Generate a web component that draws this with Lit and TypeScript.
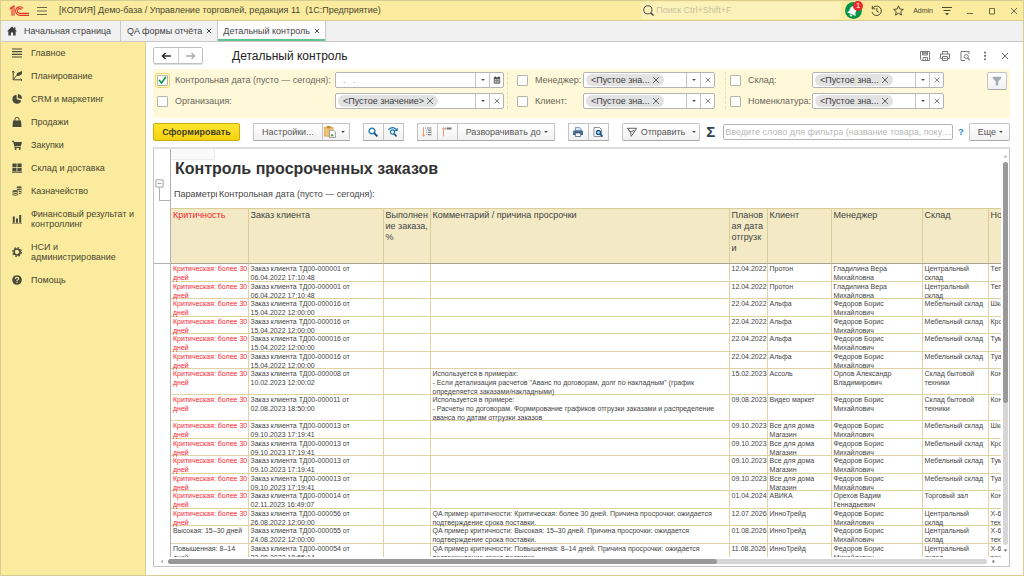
import { LitElement, html, css, svg, nothing, TemplateResult } from "lit";
import { customElement, property } from "lit/decorators.js";
import { classMap } from "lit/directives/class-map.js";

const shapes: Record<string, TemplateResult> = {
  logo: svg`<g fill="none" stroke="#e0322b" stroke-width="1.1"><path d="M.6 4.400 3 2.800v8"/><path d="M1.500 2.900 5 .9v9.900"/><path d="M14.200 3.400A4.300 4.300 0 1 0 11 10.400h9"/><path d="M12.700 4.500A2.400 2.400 0 1 0 11 8.400h9"/></g>`,
  lines: svg`<path d="M0 1.500h10M0 5h10M0 8.500h10" stroke="#6d6846" stroke-width="1" fill="none"/>`,
  home: svg`<path d="M5 .6 0 5.2h1.4V9.6h2.5V6.4h2.2v3.2h2.500V5.2H10L8.4 3.7V1.2H7.2v1.400z" fill="#3c3c3c"/>`,
  main: svg`<path d="M0 1h10M0 3.600h10M0 6.300h10M0 9h10" stroke="#4a4a3c" stroke-width="1.200" fill="none"/>`,
  plan: svg`<g stroke="#4a4a3c" fill="none"><path d="M1.200 0v8.800H10M1.200 8.800 4.500 4.500h2.200M0 1.600 1.200 0l1.200 1.600M8.600 7.400 10 8.800 8.600 10"/></g><path d="M5 2 10 0v3L7 5 4.500 4z" fill="#4a4a3c"/>`,
  pie: svg`<path d="M4.400.8A4.500 4.500 0 1 0 9.200 6.600L4.800 5.200z" fill="#4a4a3c"/><path d="M5.800 0v4l4 1A4.300 4.300 0 0 0 5.800 0z" fill="#4a4a3c"/>`,
  bag: svg`<path d="M1 3.500h8l.5 6.500h-9z" fill="#4a4a3c"/><path d="M3 5V2.200a2 2 0 0 1 4 0V5" fill="none" stroke="#4a4a3c"/>`,
  cart: svg`<path d="M0 .8h1.800l.5 1.200H10L8.800 6.200H3.300l.2.800h5.200v.9H2.800L1.200 1.800H0z" fill="#4a4a3c"/><circle cx="3.600" cy="9" r="1" fill="#4a4a3c"/><circle cx="7.800" cy="9" r="1" fill="#4a4a3c"/>`,
  boxes: svg`<path d="M.4.600h4.200v3.600H.4zM5.400.600h4.200v3.600H5.400zM.4 5h4.200v3.200H.4zM5.400 5h4.200v3.200H5.400zM0 8.800h10v1H0z" fill="#4a4a3c"/>`,
  coins: svg`<g fill="#5a5844"><ellipse cx="7.200" cy="1.400" rx="2.600" ry="1.100"/><path d="M4.800 2.400q2.400 1.400 4.900 0v1q-2.400 1.300-3.500.9L4.800 3.600zM6.800 5q1.600.2 2.900-.6v1q-1.200.8-2.900.7zM6.800 6.800q1.600.2 2.900-.6v1q-1.200.8-2.900.7z"/><ellipse cx="3.200" cy="5.200" rx="2.900" ry="1.100"/><path d="M.3 6.200q2.800 1.500 5.800 0v1q-2.800 1.500-5.800 0zM.3 8q2.800 1.500 5.800 0v1q-2.800 1.500-5.800 0z"/></g>`,
  chart: svg`<path d="M0 9.400h10v.8H0zM.8 2.400h2v6.400h-2zM4 4.600h2v4.200H4zM7.200 1h2v7.800h-2z" fill="#4a4a3c"/>`,
  gear: svg`<circle cx="5" cy="5" r="3" fill="none" stroke="#4a4a3c" stroke-width="1.700"/><circle cx="5" cy="5" r="4.300" fill="none" stroke="#4a4a3c" stroke-width="1.300" stroke-dasharray="1.700 1.680"/>`,
  help: svg`<circle cx="5" cy="5" r="4.800" fill="#4a4a3c"/><path d="M3.300 3.900q0-1.500 1.700-1.500t1.700 1.400Q6.700 4.700 5 5.300v.9M5 7v1.100" stroke="#faeb9e" stroke-width="1.100" fill="none"/>`,
  search: svg`<circle cx="4.400" cy="4.400" r="3.700" fill="none" stroke="#444" stroke-width=".9"/><path d="m7 7 2.600 2.600" stroke="#444" stroke-width="1.300"/>`,
  bell: svg`<circle cx="8" cy="8" r="8" fill="#079447"/><g transform="translate(-1 1) rotate(22 8 8)"><path d="M8 3c-2.200 0-3.100 1.500-3.100 3.200v2.400L3.600 10.600h8.800l-1.300-2V6.200C11.100 4.500 10.200 3 8 3zM6.600 11.400h2.800q-.2 1.400-1.400 1.400t-1.400-1.400z" fill="#fff"/></g>`,
  clock: svg`<g fill="none" stroke="#4f4b30" stroke-width=".9"><path d="M1.400 3A4.300 4.300 0 1 1 .9 6.400"/><path d="M1.200.8v2.600h2.600M5.300 2.700v2.900l1.900 1.200"/></g>`,
  star: svg`<path d="m5 .8 1.250 2.900 3.150.3L7 6.100l.7 3.100L5 7.500 2.300 9.200 3 6.100.6 4l3.150-.3z" fill="none" stroke="#4f4b30" stroke-width=".9"/>`,
  service: svg`<path d="M0 1.500h10M1.500 4.500h7" stroke="#4f4b30"/><path d="M3 7h4L5 9.200z" fill="#4f4b30"/>`,
  minimize: svg`<path d="M2 7.500h6" stroke="#6f6a48"/>`,
  maximize: svg`<path d="M2.500 2.500h5v5.500h-5z" fill="none" stroke="#6f6a48"/>`,
  cross: svg`<path d="m2 2 6 6M8 2 2 8" stroke="#555" fill="none" stroke-width=".9"/>`,
  tabCross: svg`<path d="m1.500 1.500 7 7M8.500 1.500l-7 7" stroke="#333" fill="none" stroke-width="1.500"/>`,
  back: svg`<path d="M10 5H1.500M4.500 2 1.500 5l3 3" stroke="#333" stroke-width="1.600" fill="none"/>`,
  forward: svg`<path d="M0 5h8.500M5.500 2l3 3-3 3" stroke="#aaa" stroke-width="1.300" fill="none"/>`,
  save: svg`<g fill="none" stroke="#6b6b6b" stroke-width=".9"><path d="M.5.5h9v9h-8l-1-1zM2.500.5v3.500h5V.5M3 9.500V6.500h4.500v3M5.500 7.500v2"/></g><path d="M3 1h4v2.500H3z" fill="#999"/>`,
  print: svg`<g fill="none" stroke="#6b6b6b" stroke-width=".9"><path d="M2.500 3V.5h5V3M2 7.500H.5V3h9v4.500H8M2.500 5.500h5v4h-5z"/><path d="M3.500 7.500h3"/></g>`,
  preview: svg`<g fill="none" stroke="#6b6b6b" stroke-width=".9"><path d="M9 3V.5H1v9h4"/><circle cx="6.300" cy="5.500" r="2"/><path d="m7.700 7 2 2.500" stroke-width="1.200"/></g>`,
  dots: svg`<path d="M4.200.8h1.700v1.700H4.200zM4.200 4.100h1.700v1.700H4.200zM4.200 7.400h1.700v1.700H4.200z" fill="#5a5a5a"/>`,
  funnel: svg`<path d="M.8.800h8.400v1.700L6.200 5.500v4H3.800v-4L.8 2.500z" fill="#a3abb5"/>`,
  caret: svg`<path d="M3.200 4h3.600L5 6z" fill="#444"/>`,
  calendar: svg`<path d="M1 1.500h8v8H1z" fill="#555"/><path d="M2 4h1.500v1.500H2zM4.300 4h1.500v1.500H4.300zM6.600 4h1.500v1.500H6.600zM2 6.500h1.500V8H2zM4.300 6.500h1.500V8H4.300zM6.600 6.500h1.500V8H6.600z" fill="#fff"/><path d="M2.800.5v2M7.200.5v2" stroke="#333" stroke-width="1.300"/>`,
  clip: svg`<path d="M.5 1h7v7.500h-7z" fill="#f0c672" stroke="#d79a3a" stroke-width=".6"/><path d="M2.500 0h3v2h-3z" fill="#c88a28"/><path d="M4.500 3.500h3.500l1.500 1.500v4.600h-5z" fill="#fff" stroke="#8b8b8b" stroke-width=".7"/><path d="m5.500 8.500 1.200-2.300 1.600 2.300z" fill="#4f8f5b"/>`,
  find: svg`<circle cx="4" cy="4" r="2.900" fill="none" stroke="#2077ae" stroke-width="1.400"/><path d="m6.200 6.200 3.200 3.200" stroke="#164f7c" stroke-width="1.900"/>`,
  findNext: svg`<path d="M.3 2.800Q4.500-1.300 8.300 2.300" fill="none" stroke="#2077ae" stroke-width="1.100"/><path d="M9.700.6v3.500H6.300z" fill="#2077ae"/><circle cx="4.500" cy="5" r="2.100" fill="none" stroke="#2077ae" stroke-width="1.200"/><path d="m6.200 6.800 2.300 2.700" stroke="#164f7c" stroke-width="1.600"/>`,
  expand: svg`<path d="M1.500 0v9M0 7.500 1.500 9.500 3 7.500" stroke="#f09a72" fill="none"/><path d="M3 1h1M5 1h4.500M6 3.200h3.500M6 5.400h3.500M6 7.600h3.500M4.500 3.200h.8M4.500 5.400h.8M4.500 7.600h.8" stroke="#808080" stroke-width="1.200"/>`,
  collapse: svg`<path d="M1.500 9.500V.8M0 2.500 1.500.5 3 2.500" stroke="#f09a72" fill="none"/><path d="M3.500 1.500h1M5 1.500h4.500" stroke="#777" stroke-width="2"/>`,
  printer: svg`<path d="M2.500.4h4l1.500 1.500V4H2.500z" fill="#d5e4f0" stroke="#4d7396" stroke-width=".7"/><path d="M1 3.500h8q1 0 1 1V8H0V4.500q0-1 1-1z" fill="#466d92"/><path d="M2.300 6h5.400v3.500H2.300z" fill="#fff" stroke="#234f76" stroke-width=".7"/>`,
  pagePreview: svg`<path d="M1 .5h5.500l2 2v7H1z" fill="#fff" stroke="#777" stroke-width=".8"/><circle cx="5.500" cy="5.500" r="2" fill="#cbe5f5" stroke="#155b8f" stroke-width="1.300"/><path d="m7 7 2.600 2.600" stroke="#155b8f" stroke-width="1.700"/>`,
  send: svg`<path d="M.5 1.300h9.300L4.200 9.300 3.500 5zM.5 1.300 3.500 5l4-1.800" fill="none" stroke="#555" stroke-width=".9"/>`,
  minus: svg`<path d="M1 1h8v8H1zM3 5h4" fill="none" stroke="#999"/>`,
  up: svg`<path d="M3 6h4L5 3.500z" fill="#aaa"/>`,
  down: svg`<path d="M3 4h4L5 6.500z" fill="#666"/>`,
  left: svg`<path d="M6.500 3v4L4 5z" fill="#aaa"/>`,
  right: svg`<path d="M4 3v4l2.500-2z" fill="#666"/>`,
};

const icon = (name: string, width = 10, height = 10, box = "0 0 10 10") =>
  html`<svg width=${width} height=${height} viewBox=${box} aria-hidden="true">${shapes[name]}</svg>`;

const shared = css`
  * { box-sizing: border-box; }
  svg { display: block; flex: none; }
  button, input { font: inherit; color: inherit; margin: 0; padding: 0; }
  button { display: flex; align-items: center; justify-content: center; border: 0; background: none; white-space: nowrap; }
`;

@customElement("nav-panel")
class NavPanel extends LitElement {
  static styles = [shared, css`
    :host { display: block; width: 145px; flex: none; background: #faeb9e; border-right: 1px solid #d8cd92; }
    .list { display: flex; flex-direction: column; gap: 13px; padding: 6px 4px 0 11px; }
    .item { display: grid; grid-template-columns: 10px 1fr; gap: 9px; align-items: center; line-height: 10px; color: #4a4730; text-decoration: none; }
  `];
  items = [
    ["main", "Главное"], ["plan", "Планирование"], ["pie", "CRM и маркетинг"], ["bag", "Продажи"],
    ["cart", "Закупки"], ["boxes", "Склад и доставка"], ["coins", "Казначейство"],
    ["chart", "Финансовый результат и контроллинг"], ["gear", "НСИ и администрирование"], ["help", "Помощь"],
  ];
  render() {
    return html`<nav class="list">${this.items.map(([i, t]) => html`<a class="item" href="#">${icon(i)}<span>${t}</span></a>`)}</nav>`;
  }
}

@customElement("filter-field")
class FilterField extends LitElement {
  @property() label = "";
  @property() token = "";
  @property({ type: Boolean }) date = false;
  @property({ type: Boolean }) checked = false;
  static styles = [shared, css`
    :host { display: grid; grid-template-columns: 18px var(--label-width) 1fr; align-items: center; height: 16px; }
    .check { appearance: none; width: 11px; height: 11px; border: 1px solid #b5b5a8; border-radius: 1px; background: #fff; }
    .check:checked { outline: 1px solid #f0d967; outline-offset: 1px; background: #fff url("data:image/svg+xml,%3Csvg xmlns='http://www.w3.org/2000/svg' viewBox='0 0 9 9'%3E%3Cpath d='M1 4l2.500 3L8 .8' fill='none' stroke='%23079447' stroke-width='1.600'/%3E%3C/svg%3E"); }
    .label { color: #6a675a; white-space: nowrap; }
    .field { display: flex; height: 16px; border: 1px solid #b4b4b4; border-radius: 2px; background: #fff; min-width: 0; }
    .value { display: flex; flex: 1; align-items: center; min-width: 0; padding: 0 2px; }
    .text { flex: 1; width: 0; min-width: 0; border: 0; outline: 0; background: none; color: #888; }
    .chip { display: flex; align-items: center; gap: 1px; height: 12px; padding: 0 3px 0 5px; border-radius: 6px; background: #e2e2e2; color: #3c3c3c; white-space: nowrap; }
    .side { width: 14px; border-left: 1px solid #c4c4c4; }
  `];
  render() {
    return html`
      <input class="check" id="use" type="checkbox" ?checked=${this.checked} aria-label="Использовать">
      <label class="label" for="value">${this.label}</label>
      <div class="field">
        <div class="value">
          ${this.token ? html`<span class="chip">${this.token}<button aria-label="Убрать">${icon("cross")}</button></span>` : nothing}
          <input class="text" id="value" type="text" .value=${this.date ? "  .   ." : ""}>
        </div>
        <button class="side" aria-label="Выбрать">${icon("caret")}</button>
        <button class="side" aria-label=${this.date ? "Календарь" : "Очистить"}>${this.date ? icon("calendar", 8, 8) : icon("cross", 8, 8)}</button>
      </div>`;
  }
}

type Row = [string, string, string, string, string, string, string, string];
const CRIT = "Критическая: более 30 дней";
const FED = "Федоров Борис Михайлович";
const order = (n: string, d: string) => `Заказ клиента ТД00-0000${n} от ${d}`;
const reason = (s: string) => `QA пример критичности: ${s} дней. Причина просрочки: ожидается\nподтверждение срока поставки.`;

const rows: Row[] = [
  [CRIT, order("01", "06.04.2022 17:10:48"), "", "12.04.2022", "Протон", "Гладилина Вера Михайловна", "Центральный склад", "Теп"],
  [CRIT, order("01", "06.04.2022 17:10:48"), "", "12.04.2022", "Протон", "Гладилина Вера Михайловна", "Центральный склад", "Теп"],
  [CRIT, order("16", "15.04.2022 12:00:00"), "", "22.04.2022", "Альфа", FED, "Мебельный склад", "Шка"],
  [CRIT, order("16", "15.04.2022 12:00:00"), "", "22.04.2022", "Альфа", FED, "Мебельный склад", "Кро"],
  [CRIT, order("16", "15.04.2022 12:00:00"), "", "22.04.2022", "Альфа", FED, "Мебельный склад", "Тум"],
  [CRIT, order("16", "15.04.2022 12:00:00"), "", "22.04.2022", "Альфа", FED, "Мебельный склад", "Туа"],
  [CRIT, order("08", "10.02.2023 12:00:02"), "Используется в примерах:\n- Если детализация расчетов \"Аванс по договорам, долг по накладным\" (график\nопределяется заказами/накладными)", "15.02.2023", "Ассоль", "Орлов Александр Владимирович", "Склад бытовой техники", "Кон"],
  [CRIT, order("11", "02.08.2023 18:50:00"), "Используется в примере:\n- Расчеты по договорам. Формирование графиков отгрузки заказами и распределение\nаванса по датам отгрузки заказов", "09.08.2023", "Видео маркет", FED, "Склад бытовой техники", "Кон"],
  [CRIT, order("13", "09.10.2023 17:19:41"), "", "09.10.2023", "Все для дома Магазин", FED, "Мебельный склад", "Шка"],
  [CRIT, order("13", "09.10.2023 17:19:41"), "", "09.10.2023", "Все для дома Магазин", FED, "Мебельный склад", "Кро"],
  [CRIT, order("13", "09.10.2023 17:19:41"), "", "09.10.2023", "Все для дома Магазин", FED, "Мебельный склад", "Тум"],
  [CRIT, order("13", "09.10.2023 17:19:41"), "", "09.10.2023", "Все для дома Магазин", FED, "Мебельный склад", "Туа"],
  [CRIT, order("14", "02.11.2023 16:49:07"), "", "01.04.2024", "АВИКА", "Орехов Вадим Геннадьевич", "Торговый зал", "Кон"],
  [CRIT, order("56", "26.08.2022 12:00:00"), reason("Критическая: более 30"), "12.07.2026", "ИнноТрейд", FED, "Центральный склад", "Х-67\nтехн"],
  ["Высокая: 15–30 дней", order("55", "24.08.2022 12:00:00"), reason("Высокая: 15–30"), "01.08.2026", "ИнноТрейд", FED, "Центральный склад", "Х-67\nтехн"],
  ["Повышенная: 8–14 дней", order("54", "22.08.2022 18:55:14"), reason("Повышенная: 8–14"), "11.08.2026", "ИнноТрейд", FED, "Центральный склад", "Х-67\nтехн"],
];

@customElement("report-sheet")
class ReportSheet extends LitElement {
  static styles = [shared, css`
    :host { display: grid; grid-template-columns: 17px minmax(0, 1fr) 8px; grid-template-rows: minmax(0, 1fr) 9px; min-height: 0; border: 1px solid #c4c4c4; border-top: 2px solid #e0e0e0; }
    .gutter { display: flex; flex-direction: column; border-right: 1px solid #b0b0b0; }
    .tree { height: 115px; padding: 30px 0 0; border-bottom: 1px solid #b0b0b0; }
    .fold { margin-left: 1px; }
    .branch { height: 13px; margin-left: 5px; border: solid #b0b0b0; border-width: 0 0 1px 1px; }
    .area { overflow: hidden; }
    .corner { width: 44px; height: 11px; background: #fafafa; border: solid #eee; border-width: 0 1px 1px 0; }
    .title { margin: 0; padding-left: 4px; font-size: 16px; line-height: 18px; color: #333; }
    .params { display: flex; height: 30px; padding: 11px 0 0 3px; font-size: 9px; line-height: 11px; color: #444; white-space: nowrap; }
    .name { width: 43px; overflow: hidden; margin-right: 2px; }
    .table { table-layout: fixed; width: 900px; border-collapse: collapse; font-size: 7px; line-height: 9px; color: #444; }
    .head { height: 55px; padding: 1px 0 0 2px; border: 1px solid #d9cd99; border-bottom-color: #aaa58c; border-left-width: 0; background: #f3eac5; font-size: 9px; line-height: 11px; font-weight: 400; text-align: left; vertical-align: top; white-space: pre; }
    .cell { padding: 0 0 0 2px; border: solid #ddd3a6; border-width: 0 1px 1px 0; vertical-align: top; }
    .lines { height: 17px; white-space: pre-line; }
    .row:nth-child(even) .lines { height: 16px; }
    .row.tall .lines { height: 25px; }
    .red { color: #fb2430; }
    .w1 { width: 77px; } .w2 { width: 135px; } .w3 { width: 47px; } .w4 { width: 299px; } .w5 { width: 38px; }
    .w6 { width: 64px; } .w7 { width: 91px; } .w8 { width: 66px; }
    .vertical { display: flex; flex-direction: column; align-items: center; gap: 1px; padding: 3px 0 2px; }
    .horizontal { grid-column: 1 / 4; display: flex; align-items: center; gap: 2px; padding: 0 11px 0 3px; }
    .track { flex: 1; background: #d6d6d6; border-radius: 3px; }
    .vertical .track { width: 5px; }
    .horizontal .track { height: 5px; }
    .thumb { background: #999; border-radius: 3px; }
    .vertical .thumb { height: 63%; }
    .horizontal .thumb { height: 5px; width: 67%; }
  `];
  heads = ["Критичность", "Заказ клиента", "Выполнен\nие заказа,\n%", "Комментарий / причина просрочки", "Планов\nая дата\nотгрузк\nи", "Клиент", "Менеджер", "Склад", "Номенклатура"];
  render() {
    return html`
      <div class="gutter"><div class="tree"><button class="fold" aria-label="Свернуть">${icon("minus", 9, 9)}</button><div class="branch"></div></div></div>
      <div class="area">
        <div class="corner"></div>
        <h2 class="title">Контроль просроченных заказов</h2>
        <div class="params"><span class="name">Параметры:</span><span>Контрольная дата (пусто — сегодня):</span></div>
        <table class="table">
          <thead><tr>${this.heads.map((h, i) => html`<th class="head w${i + 1} ${i ? "" : "red"}">${h}</th>`)}</tr></thead>
          <tbody>${rows.map(([level, ord, note, date, client, manager, store, item]) => {
            const cells = [level, ord, "", note, date, client, manager, store, item];
            return html`<tr class=${classMap({ row: true, tall: note.split("\n").length > 2 })}>${cells.map((c, i) =>
              html`<td class="cell"><div class=${classMap({ lines: true, red: i === 0 && level === CRIT })}>${c}</div></td>`)}</tr>`;
          })}</tbody>
        </table>
      </div>
      <div class="vertical">${icon("up", 9, 9)}<div class="track"><div class="thumb"></div></div>${icon("down", 9, 9)}</div>
      <div class="horizontal">${icon("left", 9, 9)}<div class="track"><div class="thumb"></div></div>${icon("right", 9, 9)}</div>`;
  }
}

@customElement("app-root")
class AppRoot extends LitElement {
  static styles = [shared, css`
    :host { display: flex; flex-direction: column; box-sizing: border-box; height: 100vh; overflow: hidden; border: 1px solid #d8cd92; background: #fff; font: 9px/11px "Liberation Sans", Arial, sans-serif; color: #444; }
    .titlebar { display: flex; align-items: center; height: 20px; flex: none; padding: 0 4px 0 8px; background: #faeb9e; border-bottom: 1px solid #d8cd92; color: #4a4730; }
    .menu { margin: 0 12px 0 7px; }
    .caption { flex: 1; white-space: pre; }
    .global { display: flex; align-items: center; gap: 2px; width: 200px; height: 17px; padding-left: 2px; border-radius: 2px; background: #fcf1b8; }
    .query { flex: 1; min-width: 0; border: 0; background: none; outline: 0; }
    .query::placeholder { color: #c9c3a2; opacity: 1; }
    .notify { position: relative; margin-left: 4px; }
    .count { position: absolute; top: -1px; right: -1px; width: 10px; height: 10px; border-radius: 5px; background: #ee2a2a; color: #fff; font-size: 8px; line-height: 10px; text-align: center; }
    .tools { display: flex; align-items: center; gap: 11px; margin-left: 9px; }
    .user { font-size: 7px; margin: 0 -2px; }
    .window { display: flex; gap: 12px; margin-left: 13px; }
    .tabs { display: flex; height: 21px; flex: none; background: #f1f1f1; border-bottom: 1px solid #c9c9c9; }
    .tab { display: flex; align-items: center; gap: 4px; padding: 0 5px 0 6px; border-right: 1px solid #c9c9c9; }
    .tab.start { gap: 7px; padding-right: 9px; }
    .tab.active { padding: 0 5px; background: #fff; box-shadow: inset 0 -2px #5fc18e; }
    .body { display: flex; flex: 1; min-height: 0; }
    .main { display: flex; flex-direction: column; flex: 1; min-width: 0; padding: 5px 13px 8px 7px; }
    .heading { display: flex; align-items: center; height: 17px; flex: none; }
    .history { display: flex; height: 17px; border: 1px solid #c0c0c0; border-radius: 2px; box-shadow: 0 1px #ddd; }
    .step { width: 24px; }
    .step + .step { border-left: 1px solid #ccc; }
    .name { flex: 1; margin: 0 0 0 29px; font-size: 12px; line-height: 16px; font-weight: 400; color: #222; }
    .actions { display: flex; gap: 10px; }
    .filters { display: flex; flex: none; margin: 5px 0; padding: 3px 3px 9px 4px; background: #fff8d9; }
    .group { display: grid; gap: 5px; --label-width: 160px; }
    .group.wide { flex: 1; }
    .group.people { width: 208px; padding-left: 9px; margin-left: 3px; border-left: 1px dashed #e6dfc0; --label-width: 48px; }
    .group.goods { width: 219px; padding-left: 4px; margin-left: 10px; border-left: 1px dashed #e6dfc0; --label-width: 64px; }
    .btn { height: 18px; padding: 0 8px; border: 1px solid #c4c4c4; border-bottom-color: #a9a9a9; border-radius: 2px; background: linear-gradient(#fff, #f1f1f1); color: #555; }
    .btn.settings { margin-left: 43px; width: 20px; padding: 0; }
    .toolbar { display: flex; align-items: center; flex: none; gap: 13px; margin-bottom: 6px; }
    .join { display: flex; }
    .join .btn { border-radius: 0; }
    .join .btn + .btn { border-left: 0; }
    .btn.small { width: 21px; padding: 0; }
    .join .btn.small + .btn.small { width: 20px; }
    .btn.pair { padding: 0 1px; gap: 2px; }
    .btn.run { width: 87px; border-color: #c9ab0c; background: linear-gradient(#ffe52e, #f5d211); color: #444025; font-weight: 700; }
    .btn.more { padding: 0 3px 0 8px; }
    .btn.send { gap: 4px; padding: 0 0 0 4px; }
    .tail { display: flex; flex: 1; align-items: center; gap: 5px; min-width: 0; margin-left: -7px; }
    .sum { width: 12px; font-size: 15px; line-height: 16px; font-weight: 700; color: #2f4256; }
    .find { flex: 1; min-width: 0; height: 16px; padding: 0 1px; border: 1px solid #b4b4b4; border-radius: 2px; text-overflow: ellipsis; }
    .find::placeholder { color: #b9b9b9; opacity: 1; }
    .hint { color: #1c87c9; font-weight: 700; text-decoration: none; }
    .sheet { flex: 1; }
  `];
  render() {
    const token = "<Пустое зна...";
    return html`
      <header class="titlebar">
        ${icon("logo", 21, 12, "0 0 21 12")}
        <button class="menu" aria-label="Меню">${icon("lines", 10, 10)}</button>
        <span class="caption">[КОПИЯ] Демо-база / Управление торговлей, редакция 11  (1С:Предприятие)</span>
        <label class="global">${icon("search", 11, 11)}<input class="query" type="search" placeholder="Поиск Ctrl+Shift+F"></label>
        <button class="notify" aria-label="Уведомления">${icon("bell", 17, 17, "0 0 16 16")}<span class="count">1</span></button>
        <div class="tools">
          <button aria-label="История">${icon("clock", 11, 11)}</button>
          <button aria-label="Избранное">${icon("star", 11, 11)}</button>
          <span class="user">Admin</span>
          <button aria-label="Сервис">${icon("service")}</button>
        </div>
        <div class="window">
          <button aria-label="Свернуть">${icon("minimize")}</button>
          <button aria-label="Развернуть">${icon("maximize")}</button>
          <button aria-label="Закрыть">${icon("cross")}</button>
        </div>
      </header>
      <div class="tabs">
        <button class="tab start">${icon("home")}Начальная страница</button>
        <button class="tab">QA формы отчёта${icon("tabCross", 6, 6)}</button>
        <button class="tab active">Детальный контроль${icon("tabCross", 6, 6)}</button>
      </div>
      <div class="body">
        <nav-panel></nav-panel>
        <main class="main">
          <div class="heading">
            <div class="history"><button class="step" aria-label="Назад">${icon("back")}</button><button class="step" aria-label="Вперед">${icon("forward")}</button></div>
            <h1 class="name">Детальный контроль</h1>
            <div class="actions">${["save", "print", "preview", "dots", "cross"].map((n) => html`<button aria-label=${n}>${icon(n)}</button>`)}</div>
          </div>
          <section class="filters">
            <div class="group wide">
              <filter-field label="Контрольная дата (пусто — сегодня):" date checked></filter-field>
              <filter-field label="Организация:" token="<Пустое значение>"></filter-field>
            </div>
            <div class="group people">
              <filter-field label="Менеджер:" token=${token}></filter-field>
              <filter-field label="Клиент:" token=${token}></filter-field>
            </div>
            <div class="group goods">
              <filter-field label="Склад:" token=${token}></filter-field>
              <filter-field label="Номенклатура:" token=${token}></filter-field>
            </div>
            <button class="btn settings" aria-label="Отбор">${icon("funnel")}</button>
          </section>
          <div class="toolbar">
            <button class="btn run">Сформировать</button>
            <div class="join"><button class="btn">Настройки...</button><button class="btn pair" aria-label="Варианты">${icon("clip", 12, 12)}${icon("caret")}</button></div>
            <div class="join"><button class="btn small" aria-label="Найти">${icon("find")}</button><button class="btn small" aria-label="Найти далее">${icon("findNext")}</button></div>
            <div class="join"><button class="btn small" aria-label="Развернуть">${icon("expand")}</button><button class="btn small" aria-label="Свернуть">${icon("collapse")}</button><button class="btn more">Разворачивать до${icon("caret")}</button></div>
            <div class="join"><button class="btn small" aria-label="Печать">${icon("printer")}</button><button class="btn small" aria-label="Просмотр">${icon("pagePreview")}</button></div>
            <button class="btn send">${icon("send")}<span>Отправить</span>${icon("caret")}</button>
            <div class="tail">
              <span class="sum">Σ</span>
              <input class="find" type="text" aria-label="Фильтр" placeholder="Введите слово для фильтра (название товара, покупателя и пр.)">
              <a class="hint" href="#">?</a>
              <button class="btn more">Еще${icon("caret")}</button>
            </div>
          </div>
          <report-sheet class="sheet"></report-sheet>
        </main>
      </div>`;
  }
}
